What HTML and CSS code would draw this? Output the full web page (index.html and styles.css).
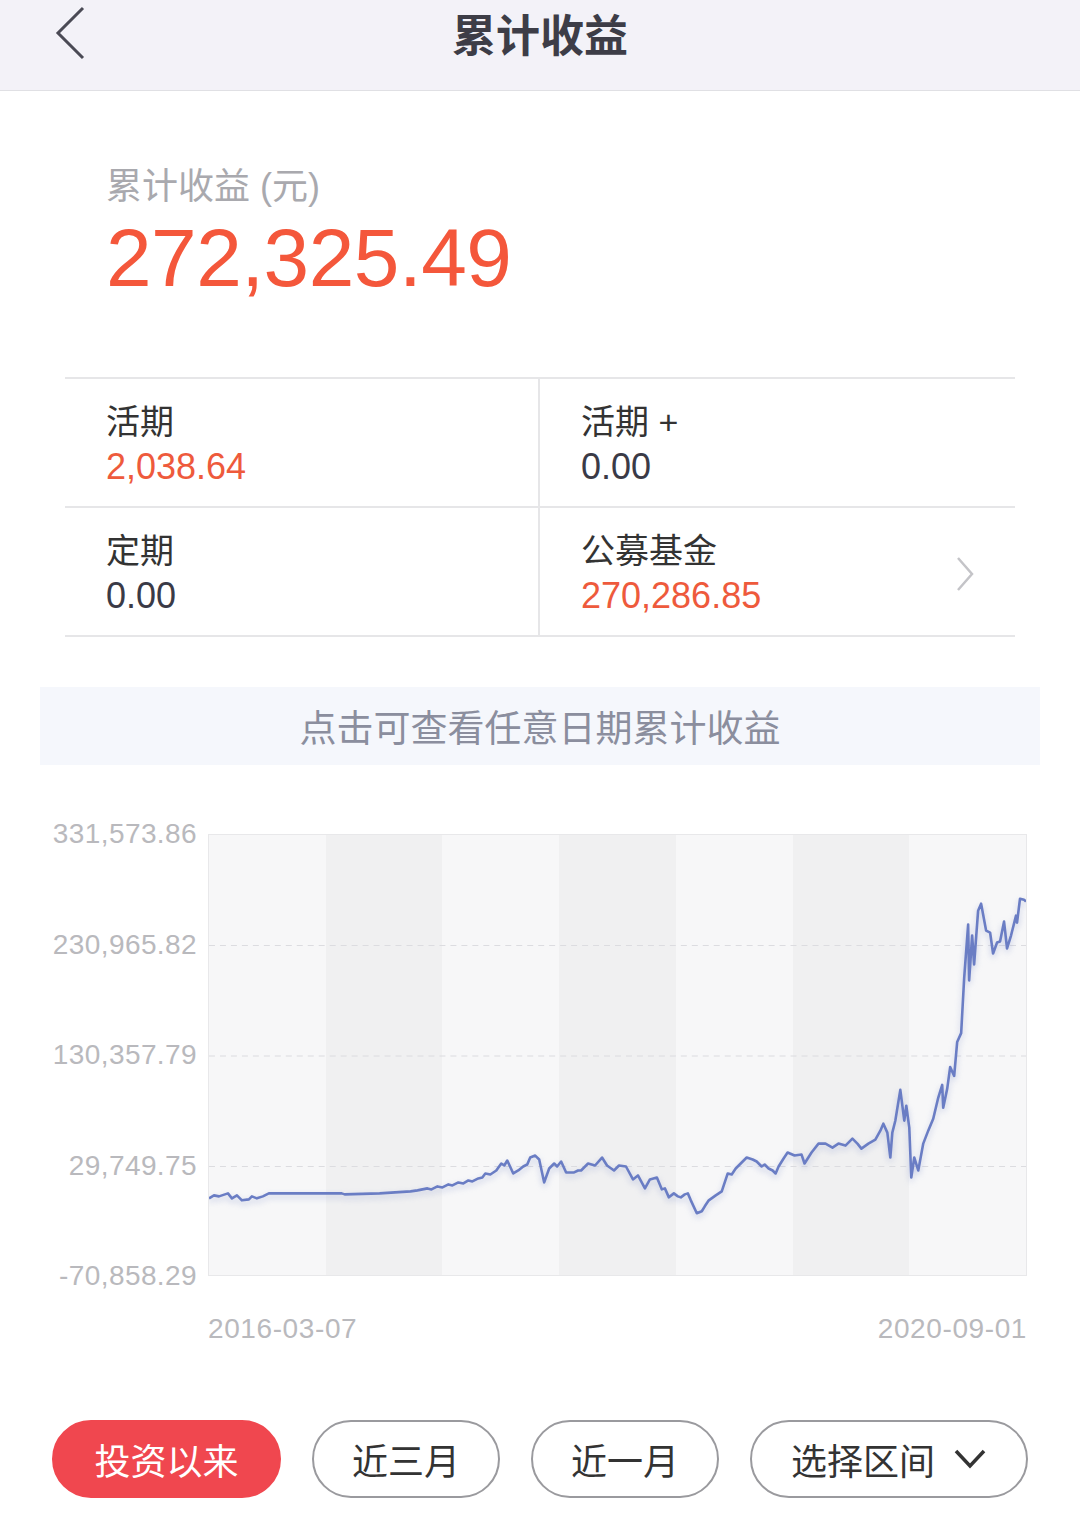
FILE: index.html
```html
<!DOCTYPE html>
<html lang="zh-CN">
<head>
    <meta charset="UTF-8">
    <meta name="viewport" content="width=device-width, initial-scale=1.0">
    <title>累计收益</title>
    <link rel="stylesheet" href="styles.css">
</head>
<body>
    <header class="nav-bar">
        <svg class="back-icon" width="40" height="56" viewBox="0 0 40 56">
            <polyline points="31,4 6,29 31,54" fill="none" stroke="#4a4a55" stroke-width="3" stroke-linejoin="miter"/>
        </svg>
        <h1 class="nav-title">累计收益</h1>
    </header>

    <section class="summary">
        <p class="summary-label">累计收益 (元)</p>
        <p class="summary-value">272,325.49</p>
    </section>

    <div class="breakdown">
        <div class="cell">
            <span class="cell-label">活期</span>
            <span class="cell-value red">2,038.64</span>
        </div>
        <div class="cell">
            <span class="cell-label">活期 +</span>
            <span class="cell-value">0.00</span>
        </div>
        <div class="cell">
            <span class="cell-label">定期</span>
            <span class="cell-value">0.00</span>
        </div>
        <div class="cell cell-link">
            <span class="cell-label">公募基金</span>
            <span class="cell-value red">270,286.85</span>
            <svg class="cell-arrow" width="20" height="36" viewBox="0 0 20 36">
                <polyline points="3,2 17,18 3,34" fill="none" stroke="#c4c4c8" stroke-width="2.5"/>
            </svg>
        </div>
    </div>

    <div class="hint-bar">点击可查看任意日期累计收益</div>

    <section class="chart">
        <div class="chart-body">
            <div class="y-axis">
                <span>331,573.86</span>
                <span>230,965.82</span>
                <span>130,357.79</span>
                <span>29,749.75</span>
                <span>-70,858.29</span>
            </div>
            <div class="plot">
                <div class="band"></div>
                <div class="band dark"></div>
                <div class="band"></div>
                <div class="band dark"></div>
                <div class="band"></div>
                <div class="band dark"></div>
                <div class="band"></div>
                <svg class="plot-lines" viewBox="208 835 819 442" preserveAspectRatio="none">
                    <g stroke="#dcdce0" stroke-width="1" stroke-dasharray="6 5">
                        <line x1="208" y1="946" x2="1027" y2="946"/>
                        <line x1="208" y1="1057" x2="1027" y2="1057"/>
                        <line x1="208" y1="1168" x2="1027" y2="1168"/>
                    </g>
                    <polyline class="trend" fill="none" stroke="#6a7dc4" stroke-width="2.6" stroke-linejoin="round"
                        points="208,1200 213,1197 218,1198 224,1196 227,1195 231,1200 236,1197 241,1202 248,1201 251,1198 256,1200 262,1198 268,1195 341,1195 344,1196 379,1195 410,1193 417,1192 427,1190 431,1191 437,1188 442,1189 448,1186 452,1187 458,1184 463,1185 468,1182 472,1183 478,1180 482,1179 485,1175 490,1176 496,1172 501,1165 504,1167 507,1162 513,1175 518,1172 523,1168 527,1166 530,1159 535,1157 539,1161 544,1184 549,1170 554,1165 557,1168 561,1163 566,1174 574,1174 578,1172 581,1172 588,1165 595,1167 602,1159 607,1167 614,1172 619,1167 626,1168 633,1181 638,1177 645,1190 650,1181 657,1179 662,1191 665,1190 669,1199 674,1195 678,1198 681,1199 685,1196 688,1195 691,1202 697,1215 702,1213 705,1208 709,1202 716,1197 719,1195 722,1193 728,1175 732,1176 736,1170 741,1165 747,1159 753,1161 757,1163 762,1168 765,1166 769,1170 773,1172 776,1175 779,1168 784,1160 788,1154 795,1157 802,1156 805,1165 812,1154 819,1145 826,1145 833,1149 839,1145 846,1147 853,1140 858,1145 862,1150 869,1145 876,1141 881,1132 884,1125 888,1134 891,1159 893,1134 896,1122 901,1091 905,1122 907,1107 910,1129 912,1179 915,1159 919,1172 924,1145 929,1132 934,1120 939,1099 943,1086 944,1109 948,1090 951,1068 955,1077 958,1043 962,1034 965,979 969,925 970,981 973,936 975,965 979,911 982,904 987,931 991,933 994,954 998,943 1001,942 1005,922 1008,949 1012,936 1017,916 1018,923 1021,899 1025,900 1027,902"/>
                </svg>
            </div>
        </div>
        <div class="x-axis">
            <span>2016-03-07</span>
            <span>2020-09-01</span>
        </div>
    </section>

    <div class="range-tabs">
        <button class="tab active">投资以来</button>
        <button class="tab">近三月</button>
        <button class="tab">近一月</button>
        <button class="tab tab-wide">选择区间
            <svg class="tab-arrow" width="34" height="24" viewBox="0 0 34 24">
                <polyline points="3,4 17,19 31,4" fill="none" stroke="#333" stroke-width="3.5"/>
            </svg>
        </button>
    </div>
</body>
</html>
```

FILE: styles.css
```css
body {
    margin: 0;
    width: 1080px;
    background-color: #fff;
    font-family: "Liberation Sans", "Noto Sans CJK SC", sans-serif;
    color: #333;
}
p {
    margin: 0;
}
.nav-bar {
    position: relative;
    height: 90px;
    background-color: #f3f2f8;
    border-bottom: 1px solid #e0e0e4;
    display: flex;
    justify-content: center;
    align-items: flex-start;
}
.back-icon {
    position: absolute;
    left: 52px;
    top: 4px;
}
.nav-title {
    margin: 8px 0 0;
    font-size: 44px;
    line-height: 50px;
    font-weight: bold;
    color: #3d3d47;
    font-family: "Noto Sans CJK SC", sans-serif;
}
.summary {
    padding: 74px 0 0 106px;
    height: 222px;
    box-sizing: border-box;
}
.summary-label {
    font-size: 36px;
    line-height: 44px;
    color: #a9a9ae;
}
.summary-value {
    margin-top: 4px;
    font-size: 82px;
    line-height: 90px;
    color: #f4573b;
    letter-spacing: -0.5px;
}
.breakdown {
    margin: 64px 65px 0;
    display: grid;
    grid-template-columns: 1fr 1fr;
    border-top: 2px solid #e6e6e8;
}
.cell {
    position: relative;
    height: 129px;
    padding: 20px 0 0 41px;
    box-sizing: border-box;
    border-bottom: 2px solid #e6e6e8;
    display: flex;
    flex-direction: column;
}
.cell:nth-child(odd) {
    border-right: 2px solid #e6e6e8;
}
.cell-label {
    font-size: 34px;
    line-height: 46px;
    color: #333;
}
.cell-value {
    font-size: 36px;
    line-height: 44px;
    color: #3a3a46;
}
.cell-value.red {
    color: #ee5a3c;
}
.cell-arrow {
    position: absolute;
    right: 40px;
    top: 48px;
}
.hint-bar {
    margin: 50px 40px 0;
    height: 78px;
    background-color: #f5f7fc;
    display: flex;
    justify-content: center;
    align-items: center;
    font-size: 37px;
    color: #8b8e9e;
    font-family: "Noto Sans CJK SC", sans-serif;
}
.chart {
    margin-top: 69px;
}
.chart-body {
    display: flex;
    height: 442px;
}
.y-axis {
    width: 197px;
    margin: -15px 11px -15px 0;
    display: flex;
    flex-direction: column;
    justify-content: space-between;
    align-items: flex-end;
    font-size: 28px;
    line-height: 30px;
    letter-spacing: 0.4px;
    color: #b9b9bd;
}
.plot {
    position: relative;
    width: 819px;
    display: flex;
    border: 1px solid #e8e8ea;
    box-sizing: border-box;
}
.band {
    flex: 1;
    background-color: #f7f7f8;
}
.band.dark {
    background-color: #f0f0f1;
}
.plot-lines {
    position: absolute;
    left: 0;
    top: 0;
    width: 100%;
    height: 100%;
}
.trend {
    filter: drop-shadow(0 3px 3px rgba(106, 125, 196, 0.35));
}
.x-axis {
    margin: 38px 0 0 208px;
    width: 819px;
    display: flex;
    justify-content: space-between;
    font-size: 28px;
    line-height: 30px;
    letter-spacing: 0.6px;
    color: #b9b9bd;
}
.range-tabs {
    margin-top: 76px;
    padding-left: 52px;
    display: flex;
    gap: 31px;
}
.tab {
    width: 188px;
    height: 78px;
    border: 2px solid #9a9a9e;
    border-radius: 39px;
    background-color: #fff;
    font-family: "Noto Sans CJK SC", sans-serif;
    font-size: 36px;
    color: #333;
    display: flex;
    justify-content: center;
    align-items: center;
    gap: 18px;
    padding: 0;
}
.tab.active {
    width: 229px;
    border-color: #f0474f;
    background-color: #f0474f;
    color: #fff;
}
.tab-wide {
    width: 278px;
}
```
